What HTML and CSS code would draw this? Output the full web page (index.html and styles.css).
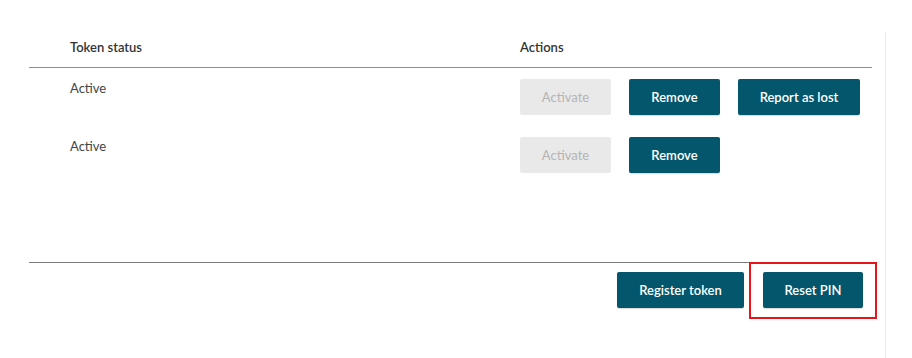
FILE: index.html
```html
<!DOCTYPE html>
<html lang="en">
<head>
<meta charset="utf-8">
<title>Tokens</title>
<link rel="stylesheet" href="styles.css">
</head>
<body>
<div class="panel">
  <div class="tokens">
    <div class="table">
      <div class="row head">
        <div class="cell status">Token status</div>
        <div class="cell actions">Actions</div>
      </div>
      <div class="row">
        <div class="cell status">Active</div>
        <div class="cell actions">
          <button class="btn disabled" disabled>Activate</button>
          <button class="btn">Remove</button>
          <button class="btn wide">Report as lost</button>
        </div>
      </div>
      <div class="row">
        <div class="cell status">Active</div>
        <div class="cell actions">
          <button class="btn disabled" disabled>Activate</button>
          <button class="btn">Remove</button>
        </div>
      </div>
    </div>
    <div class="footer">
      <button class="btn register">Register token</button>
      <span class="highlight"><button class="btn reset">Reset PIN</button></span>
    </div>
  </div>
</div>
</body>
</html>
```

FILE: styles.css
```css
html, body {
  margin: 0;
  padding: 0;
  background: #ffffff;
}
body {
  font-family: Lato, "Open Sans", sans-serif;
  font-size: 13px;
  color: #444;
}
.panel {
  margin-top: 32px;
  width: 886px;
  height: 326px;
  border-right: 1px solid #ececec;
  box-sizing: border-box;
}
.tokens {
  margin-left: 29px;
  width: 843px;
}
.table {
  height: 230px;
}
.row {
  display: grid;
  grid-template-columns: 491px 1fr;
  padding: 11px 0;
}
.row.head {
  padding: 6px 0 0;
  height: 29px;
  border-bottom: 1px solid #8c8c8c;
  font-weight: 600;
  color: #333;
}
.cell.status {
  padding-left: 41px;
  line-height: 18px;
}
.cell.actions {
  display: flex;
  gap: 18px;
  line-height: 18px;
}
.btn {
  font-family: inherit;
  font-size: 13px;
  font-weight: 600;
  height: 36px;
  width: 91px;
  border: 0;
  border-radius: 2px;
  background: #03566b;
  color: #fff;
  padding: 0;
  box-shadow: 0 1px 1px rgba(0,0,0,0.15);
}
.btn.wide { width: 122px; }
.btn.disabled {
  background: #e9e9e9;
  color: #b4b4b4;
  font-weight: 400;
  box-shadow: none;
}
.footer {
  border-top: 1px solid #7a7a7a;
  display: flex;
  justify-content: flex-end;
  gap: 19px;
  padding: 9px 9px 0 0;
}
.btn.register { width: 127px; }
.btn.reset { width: 100px; }
.highlight {
  position: relative;
  display: inline-flex;
}
.highlight::after {
  content: "";
  position: absolute;
  top: -10px;
  bottom: -11px;
  left: -14px;
  right: -14px;
  border: 2px solid #e8141b;
  pointer-events: none;
}
```
